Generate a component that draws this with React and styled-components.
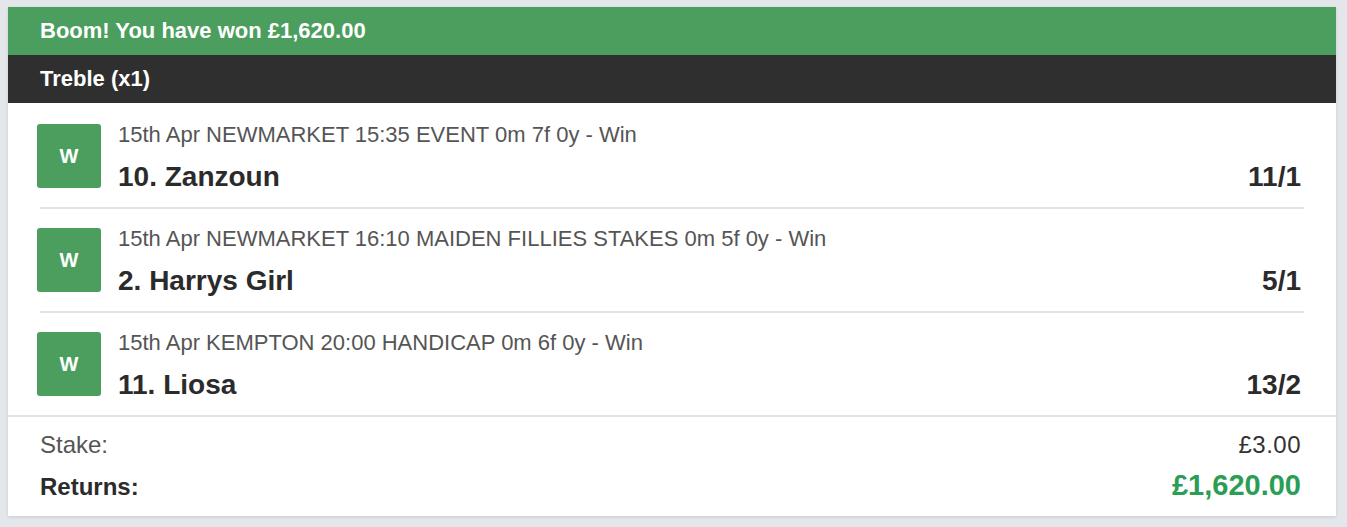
import React from 'react';
import styled, { createGlobalStyle } from 'styled-components';

const GlobalStyle = createGlobalStyle`
  html, body {
    margin: 0;
    padding: 0;
    background: #e3e6ea;
    font-family: 'Liberation Sans', Arial, sans-serif;
  }
`;

const Page = styled.div`
  padding: 7px 11px 10px 8px;
`;

const Card = styled.section`
  background: #ffffff;
  box-shadow: 0 1px 3px rgba(0, 0, 0, 0.12);
`;

const Banner = styled.div`
  height: 48px;
  display: flex;
  align-items: center;
  padding: 0 32px;
  background: ${(p) => (p.$dark ? '#2f2f2f' : '#4b9e5d')};
  color: #ffffff;
  font-size: 22px;
  font-weight: 700;
`;

const Legs = styled.div`
  padding: 2px 32px 0;
`;

const Leg = styled.div`
  display: flex;
  align-items: center;
  gap: 17px;
  padding: 19px 0;
  border-bottom: 2px solid #e1e5e9;

  &:last-child {
    border-bottom: none;
  }
`;

const Badge = styled.div`
  width: 64px;
  height: 64px;
  flex: none;
  border-radius: 3px;
  background: #4b9e5d;
  color: #ffffff;
  font-size: 20px;
  font-weight: 700;
  display: flex;
  align-items: center;
  justify-content: center;
  margin-left: -3px;
`;

const LegBody = styled.div`
  flex: 1;
  display: flex;
  flex-direction: column;
  gap: 14px;
  margin: -2px 0 -5px;
`;

const Meta = styled.div`
  font-size: 22px;
  color: #555555;
  line-height: 24px;
`;

const NameRow = styled.div`
  display: flex;
  justify-content: space-between;
  align-items: baseline;
  font-size: 28px;
  font-weight: 700;
  color: #2b2b2b;
  line-height: 32px;
  padding-right: 3px;
`;

const Footer = styled.div`
  border-top: 2px solid #e1e5e9;
  padding: 12px 35px 13px 32px;
  display: flex;
  flex-direction: column;
  gap: 8px;
`;

const SumRow = styled.div`
  display: flex;
  justify-content: space-between;
  align-items: baseline;
  font-size: 24px;
  line-height: 32px;
  color: ${(p) => (p.$bold ? '#2b2b2b' : '#555555')};
  font-weight: ${(p) => (p.$bold ? 700 : 400)};
`;

const Amount = styled.span`
  color: ${(p) => (p.$win ? '#2b9d55' : '#333333')};
  font-size: ${(p) => (p.$win ? '29px' : '24px')};
  letter-spacing: ${(p) => (p.$win ? '0' : '0.5px')};
`;

const legs = [
  { meta: '15th Apr NEWMARKET 15:35 EVENT 0m 7f 0y - Win', name: '10. Zanzoun', odds: '11/1' },
  { meta: '15th Apr NEWMARKET 16:10 MAIDEN FILLIES STAKES 0m 5f 0y - Win', name: '2. Harrys Girl', odds: '5/1' },
  { meta: '15th Apr KEMPTON 20:00 HANDICAP 0m 6f 0y - Win', name: '11. Liosa', odds: '13/2' },
];

const App = () => (
  <Page>
    <GlobalStyle />
    <Card>
      <Banner>Boom! You have won £1,620.00</Banner>
      <Banner $dark>Treble (x1)</Banner>
      <Legs>
        {legs.map((leg, i) => (
          <Leg key={i}>
            <Badge>W</Badge>
            <LegBody>
              <Meta>{leg.meta}</Meta>
              <NameRow>
                <span>{leg.name}</span>
                <span>{leg.odds}</span>
              </NameRow>
            </LegBody>
          </Leg>
        ))}
      </Legs>
      <Footer>
        <SumRow>
          <span>Stake:</span>
          <Amount>£3.00</Amount>
        </SumRow>
        <SumRow $bold>
          <span>Returns:</span>
          <Amount $win>£1,620.00</Amount>
        </SumRow>
      </Footer>
    </Card>
  </Page>
);

export default App;
